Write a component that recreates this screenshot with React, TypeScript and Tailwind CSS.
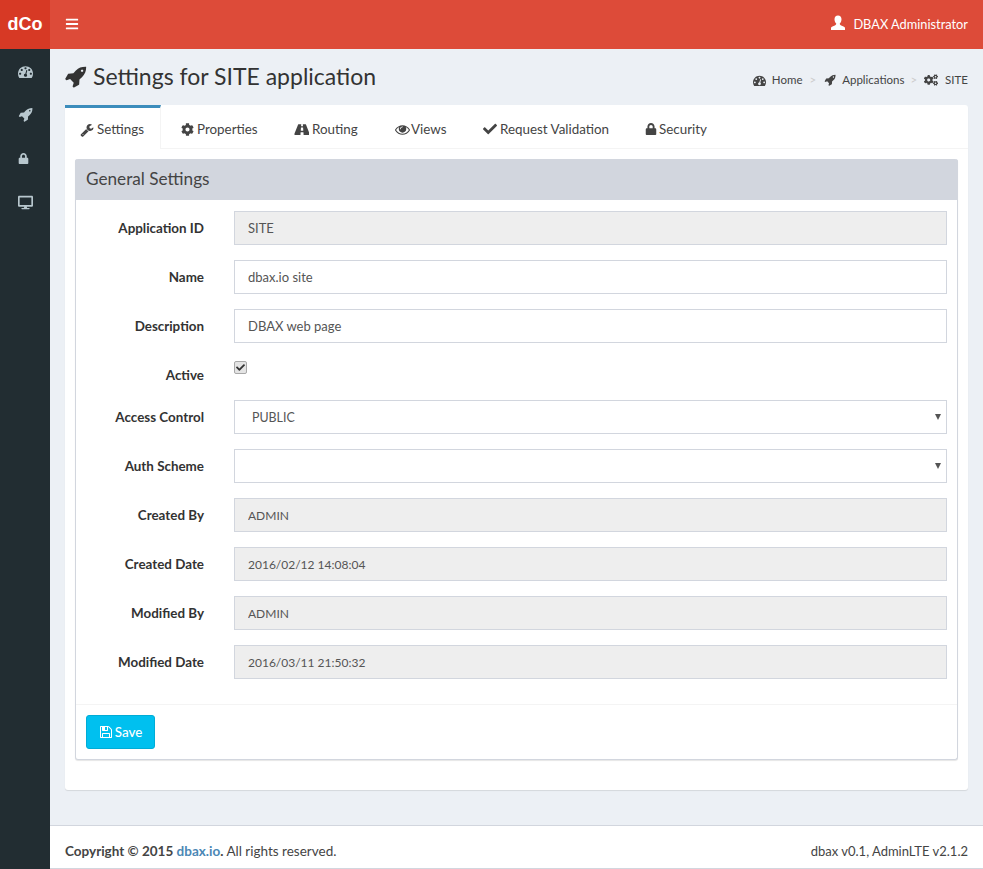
import { FaBars, FaCheck, FaCog, FaCogs, FaDesktop, FaLock } from 'react-icons/fa';

// Font Awesome 4 shapes, the 5.x ones in react-icons are too different
const paths = {
  rocket: 'M1504 448q0-40-28-68t-68-28-68 28-28 68 28 68 68 28 68-28 28-68zm224-288q0 249-75.5 430.5t-253.5 360.5q-81 80-195 176l-20 379q-2 16-16 26l-384 224q-7 4-16 4-12 0-23-9l-64-64q-13-14-8-32l85-276-281-281-276 85q-3 1-9 1-14 0-23-9l-64-64q-17-19-5-39l224-384q10-14 26-16l379-20q96-114 176-195 188-187 358-258t431-71q14 0 24 9.5t10 22.5z',
  dashboard: 'M384 1152q0-53-37.5-90.5t-90.5-37.5-90.5 37.5-37.5 90.5 37.5 90.5 90.5 37.5 90.5-37.5 37.5-90.5zm192-448q0-53-37.5-90.5t-90.5-37.5-90.5 37.5-37.5 90.5 37.5 90.5 90.5 37.5 90.5-37.5 37.5-90.5zm428 481l101-382q6-26-7.5-48.5t-38.5-29.5-48 6.5-30 39.5l-101 382q-60 5-107 43.5t-63 98.5q-20 77 20 146t117 89 146-20 89-117q16-60-6-117t-72-91zm660-33q0-53-37.5-90.5t-90.5-37.5-90.5 37.5-37.5 90.5 37.5 90.5 90.5 37.5 90.5-37.5 37.5-90.5zm-640-640q0-53-37.5-90.5t-90.5-37.5-90.5 37.5-37.5 90.5 37.5 90.5 90.5 37.5 90.5-37.5 37.5-90.5zm448 192q0-53-37.5-90.5t-90.5-37.5-90.5 37.5-37.5 90.5 37.5 90.5 90.5 37.5 90.5-37.5 37.5-90.5zm320 448q0 261-141 483-19 29-54 29h-1402q-35 0-54-29-141-221-141-483 0-182 71-348t191-286 286-191 348-71 348 71 286 191 191 286 71 348z',
  road: 'M1111 1004v-4l-24-320q-1-13-11-22.5t-23-9.5h-186q-13 0-23 9.5t-11 22.5l-24 320v4q-1 12 8 20t21 8h244q12 0 21-8t8-20zm759 467q0 73-46 73h-704q13 0 22-9.5t8-22.5l-20-256q-1-13-11-22.5t-23-9.5h-272q-13 0-23 9.5t-11 22.5l-20 256q-1 13 8 22.5t22 9.5h-704q-46 0-46-73 0-54 26-116l417-1044q8-19 26-33t38-14h339q-13 0-23 9.5t-11 22.5l-15 192q-1 14 8 23t22 9h166q13 0 22-9t8-23l-15-192q-1-13-11-22.5t-23-9.5h339q20 0 38 14t26 33l417 1044q26 62 26 116z',
  wrench: 'M448 1472q0-26-19-45t-45-19-45 19-19 45 19 45 45 19 45-19 19-45zm644-420l-682 682q-37 37-90 37-52 0-91-37l-106-108q-38-36-38-90 0-53 38-91l681-681q39 98 114.5 173.5t173.5 114.5zm634-435q0 39-23 106-47 134-164.5 217.5t-258.5 83.5q-185 0-316.5-131.5t-131.5-316.5 131.5-316.5 316.5-131.5q58 0 121.5 16.5t107.5 46.5q16 11 16 28t-16 28l-293 169v224l193 107q5-3 79-48.5t135.5-81 70.5-35.5q15 0 23.5 10t8.5 25z',
  floppy: 'M512 1536h768v-384h-768v384zm896 0h128v-896q0-14-10-38.5t-20-34.5l-281-281q-10-10-34-20t-39-10v416q0 40-28 68t-68 28h-576q-40 0-68-28t-28-68v-416h-128v1280h128v-416q0-40 28-68t68-28h832q40 0 68 28t28 68v416zm-384-928v-320q0-13-9.5-22.5t-22.5-9.5h-192q-13 0-22.5 9.5t-9.5 22.5v320q0 13 9.5 22.5t22.5 9.5h192q13 0 22.5-9.5t9.5-22.5zm640 32v928q0 40-28 68t-68 28h-1344q-40 0-68-28t-28-68v-1344q0-40 28-68t68-28h928q40 0 88 20t76 48l280 280q28 28 48 76t20 88z',
  eye: 'M1664 960q-152-236-381-353 61 104 61 225 0 185-131.5 316.5t-316.5 131.5-316.5-131.5-131.5-316.5q0-121 61-225-229 117-381 353 133 205 333.5 326.5t434.5 121.5 434.5-121.5 333.5-326.5zm-720-384q0-20-14-34t-34-14q-125 0-214.5 89.5t-89.5 214.5q0 20 14 34t34 14 34-14 14-34q0-86 61-147t147-61q20 0 34-14t14-34zm848 384q0 34-20 69-140 230-376.5 368.5t-499.5 138.5-499.5-139-376.5-368q-20-35-20-69t20-69q140-229 376.5-368t499.5-139 499.5 139 376.5 368q20 35 20 69z',
};

function Fa4({ name, size }: { name: keyof typeof paths; size: number }) {
  return (
    <svg width={size} height={size} viewBox="0 0 1792 1792" fill="currentColor" className="shrink-0">
      <path d={paths[name]} />
    </svg>
  );
}

function UserIcon() {
  return (
    <svg width="16" height="16" viewBox="0 0 16 16" fill="currentColor" className="shrink-0 -mt-[3px]">
      <path d="M8 0.5c2.2 0 3.5 1.6 3.5 3.8 0 1.7-.7 3.4-1.7 4.3-.2.9.3 1.4 1.3 1.8 1.7.6 3.4 1.2 3.9 2.3v2.3H1v-2.3c.5-1.1 2.2-1.7 3.9-2.3 1-.4 1.5-.9 1.3-1.8-1-.9-1.7-2.6-1.7-4.3C4.5 2.1 5.8.5 8 .5z" />
    </svg>
  );
}

const tabs = [
  { label: 'Settings', icon: <Fa4 name="wrench" size={14} />, active: true, cls: 'w-[96px] pl-[15px] gap-[3px]' },
  { label: 'Properties', icon: <FaCog size={13} />, cls: 'w-[115px] pl-[20px] gap-[3px]' },
  { label: 'Routing', icon: <Fa4 name="road" size={15} />, cls: 'w-[99px] pl-[18px] gap-[3px]' },
  { label: 'Views', icon: <Fa4 name="eye" size={15} />, cls: 'w-[89px] pl-[20px] gap-[1px]' },
  { label: 'Request Validation', icon: <FaCheck size={14} />, cls: 'w-[162px] pl-[19px] gap-[3px]' },
  { label: 'Security', icon: <FaLock size={12} />, cls: 'w-[100px] pl-[19px] gap-[2px]' },
];

function Label({ children }: { children: string }) {
  return <label className="w-[128px] shrink-0 text-right font-bold text-[13.4px] text-[#333]">{children}</label>;
}

function TextRow({ label, value, readOnly, narrow }: { label: string; value: string; readOnly?: boolean; narrow?: boolean }) {
  return (
    <div className="flex items-center gap-[30px] h-[34px] mb-[15px]">
      <Label>{label}</Label>
      <input
        readOnly
        value={value}
        className={`flex-1 min-w-0 h-[34px] px-[13px] border border-[#d2d6de] text-[#555] outline-none ${narrow ? 'text-[12px]' : 'text-[13px] pb-px'} ${readOnly ? 'bg-[#eee]' : 'bg-white'}`}
      />
    </div>
  );
}

function SelectRow({ label, value }: { label: string; value: string }) {
  return (
    <div className="flex items-center gap-[30px] h-[34px] mb-[15px]">
      <Label>{label}</Label>
      <div className="relative flex-1 min-w-0">
        <select
          value={value}
          onChange={() => {}}
          className="w-full h-[34px] pl-[17px] pt-[2px] border border-[#d2d6de] bg-white text-[12.4px] text-[#555] appearance-none outline-none"
        >
          <option value={value}>{value}</option>
        </select>
        {/* arrow over the select */}
        <span className="absolute right-[6px] top-[14px] w-0 h-0 border-x-[3.5px] border-x-transparent border-t-[6px] border-t-[#555] pointer-events-none" />
      </div>
    </div>
  );
}

export default function App() {
  return (
    <div className="flex min-h-[869px] bg-[#ecf0f5] font-['Lato','Liberation_Sans',sans-serif] text-[14px] text-[#333]">
      {/* Sidebar */}
      <aside className="w-[50px] shrink-0 bg-[#222d32] flex flex-col">
        <div className="h-[49px] bg-[#d73925] text-white font-bold text-[18px] flex items-center justify-center font-['Liberation_Sans',sans-serif]">dCo</div>
        <div className="flex flex-col pl-[18px] text-[#b8c7ce]">
          <div className="h-[44px] flex items-center"><Fa4 name="dashboard" size={15} /></div>
          <div className="h-[43px] flex items-center"><Fa4 name="rocket" size={15} /></div>
          <div className="h-[44px] flex items-center"><FaLock size={11} /></div>
          <div className="h-[44px] flex items-center"><FaDesktop size={15} /></div>
        </div>
      </aside>

      <div className="flex-1 min-w-0 flex flex-col">
        {/* Top bar */}
        <header className="h-[49px] bg-[#dd4b39] text-white flex items-center justify-between px-[15px]">
          <FaBars size={14} className="-mt-px" />
          <div className="flex items-center gap-[7px]">
            <UserIcon />
            <span className="text-[12.8px]">DBAX Administrator</span>
          </div>
        </header>

        {/* Content */}
        <main className="flex-1 px-[15px]">
          <div className="flex items-center justify-between h-[56px]">
            <h1 className="flex items-center gap-[6px] text-[23px] text-[#333] leading-none -mt-[2px]">
              <span className="-ml-px"><Fa4 name="rocket" size={23} /></span>
              Settings for SITE application
            </h1>
            <div className="flex items-center text-[11.5px] text-[#444] mt-[6px]">
              <Fa4 name="dashboard" size={13} />
              <span className="ml-[6px]">Home</span>
              <span className="ml-[7px] mr-[8px] text-[#ccc]">&gt;</span>
              <Fa4 name="rocket" size={12} />
              <span className="ml-[6px]">Applications</span>
              <span className="ml-[6px] mr-[7px] text-[#ccc]">&gt;</span>
              <FaCogs size={14} />
              <span className="ml-[7px]">SITE</span>
            </div>
          </div>

          <section className="bg-white rounded-[3px] shadow-[0_1px_1px_rgba(0,0,0,0.1)] h-[685px]">
            <nav className="flex h-[44px] border-b border-[#f4f4f4]">
              {tabs.map((t) => (
                <div
                  key={t.label}
                  className={`flex items-center text-[13.4px] text-[#444] ${t.cls} ${t.active ? 'h-[44px] pt-[2px] border-t-[3px] border-t-[#3c8dbc] border-r border-r-[#f4f4f4] bg-white' : 'pt-[5px]'}`}
                >
                  {t.icon}
                  <span>{t.label}</span>
                </div>
              ))}
            </nav>

            <div className="p-[10px]">
              <div className="border border-t-0 border-[#d2d6de] rounded-[3px] shadow-[0_1px_1px_rgba(0,0,0,0.1)] bg-white">
                <div className="h-[41px] -mx-px bg-[#d2d6de] rounded-t-[3px] flex items-center px-[11px] pb-[2px] text-[17.2px] text-[#444]">General Settings</div>
                <div className="pt-[11px] pr-[10px] pb-[10px]">
                  <TextRow label="Application ID" value="SITE" readOnly />
                  <TextRow label="Name" value="dbax.io site" />
                  <TextRow label="Description" value="DBAX web page" />
                  <div className="flex gap-[30px] h-[42px]">
                    <div className="w-[128px] shrink-0 text-right font-bold text-[13.4px] mt-[7px]">Active</div>
                    <span className="w-[13px] h-[13px] mt-[3px] rounded-[2px] border border-[#a8a8a8] bg-[#e4e4e4] text-[#333] flex items-center justify-center">
                      <FaCheck size={9} />
                    </span>
                  </div>
                  <SelectRow label="Access Control" value="PUBLIC" />
                  <SelectRow label="Auth Scheme" value="" />
                  <TextRow label="Created By" value="ADMIN" readOnly narrow />
                  <TextRow label="Created Date" value="2016/02/12 14:08:04" readOnly narrow />
                  <TextRow label="Modified By" value="ADMIN" readOnly narrow />
                  <TextRow label="Modified Date" value="2016/03/11 21:50:32" readOnly narrow />
                </div>
                <div className="border-t border-[#f4f4f4] p-[10px]">
                  <button className="flex items-center justify-center gap-[2px] w-[69px] h-[34px] rounded-[3px] bg-[#00c0ef] border border-[#00acd6] text-white text-[13.4px] font-medium">
                    <Fa4 name="floppy" size={14} />
                    Save
                  </button>
                </div>
              </div>
            </div>
          </section>
        </main>

        {/* Footer */}
        <footer className="h-[44px] bg-white border-t border-[#d2d6de] border-b flex items-center justify-between px-[15px] pt-[9px] text-[#444]">
          <span className="text-[13.5px]">
            <b>Copyright © 2015 <a className="text-[#4b87b5]">dbax.io</a>.</b> All rights reserved.
          </span>
          <span className="text-[13px]">dbax v0.1, AdminLTE v2.1.2</span>
        </footer>
      </div>
    </div>
  );
}
